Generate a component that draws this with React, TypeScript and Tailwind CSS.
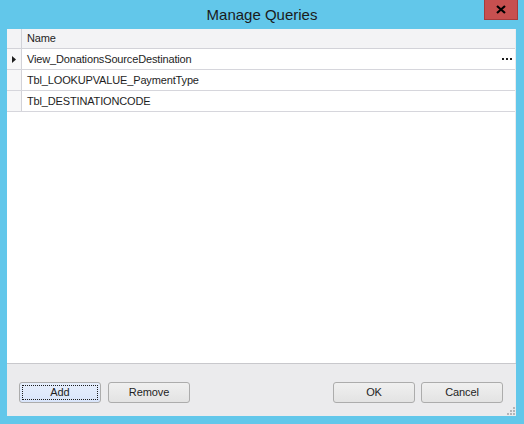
import React from 'react';

const rows = ['View_DonationsSourceDestination', 'Tbl_LOOKUPVALUE_PaymentType', 'Tbl_DESTINATIONCODE'];

const Btn: React.FC<{ label: string; focused?: boolean }> = ({ label, focused }) => (
  <button
    type="button"
    className={`w-[82px] h-[21px] rounded-[3px] border border-[#acacac] p-[2px] text-[11px] tracking-[-0.1px] text-[#1e1e1e] ${
      focused ? 'bg-gradient-to-b from-[#e6eefc] to-[#d9e5fa]' : 'bg-gradient-to-b from-[#f0f0f0] to-[#e3e3e3]'
    }`}
  >
    <span
      className={`flex h-full w-full items-center justify-center ${
        focused ? 'border border-dotted border-[#1e1e1e]' : ''
      }`}
    >
      {label}
    </span>
  </button>
);

export default function App() {
  return (
    <div
      className="w-[524px] h-[424px] bg-[#62c7ea] flex flex-col"
      style={{ fontFamily: '"Liberation Sans", Arial, sans-serif' }}
    >
      {/* Title bar */}
      <div className="relative h-[29px] flex items-center justify-center">
        <span className="text-[15px] text-[#1b1b1b] pt-[1px]">Manage Queries</span>
        <div className="absolute right-[6px] top-0 w-[34px] h-[20px] bg-[#c75050] border border-t-0 border-[#a63c3c] flex items-center justify-center">
          <svg width="10" height="9" viewBox="0 0 10 9">
            <path d="M1 1 L9 8 M9 1 L1 8" stroke="#000" strokeWidth="2.2" />
          </svg>
        </div>
      </div>

      {/* Client area */}
      <div className="flex-1 ml-[7px] mr-[8px] mb-[8px] flex flex-col bg-[#ebebed]">
        {/* Grid */}
        <div className="flex-1 bg-white flex flex-col text-[11px] tracking-[-0.15px] text-[#1e1e1e] mr-[1px]">
          <div className="flex h-[20px] bg-[#f3f3f5] border-b border-[#d2d2d8]">
            <div className="w-[15px] border-r border-[#d2d2d8]" />
            <div className="flex items-center pl-[5px]">Name</div>
          </div>
          {rows.map((r, i) => (
            <div key={r} className="flex h-[21px] border-b border-[#d6d6dc]">
              <div className="w-[15px] bg-[#f7f7f8] border-r border-[#d2d2d8] flex items-center justify-center">
                {i === 0 && (
                  <svg width="4" height="7" viewBox="0 0 4 7">
                    <path d="M0 0 L4 3.5 L0 7 Z" fill="#1e1e1e" />
                  </svg>
                )}
              </div>
              <div className="flex-1 flex items-center pl-[5px]">{r}</div>
              {i === 0 && (
                <div className="flex items-center gap-[2px] pr-[3px]">
                  <span className="w-[2px] h-[2px] bg-[#1e1e1e]" />
                  <span className="w-[2px] h-[2px] bg-[#1e1e1e]" />
                  <span className="w-[2px] h-[2px] bg-[#1e1e1e]" />
                </div>
              )}
            </div>
          ))}
        </div>

        {/* Buttons */}
        <div className="relative h-[53px] border-t border-[#c8c8cc] flex items-start pt-[18px] pl-[12px] pr-[13px]">
          <div className="flex gap-[7px]">
            <Btn label="Add" focused />
            <Btn label="Remove" />
          </div>
          <div className="ml-auto flex gap-[6px]">
            <Btn label="OK" />
            <Btn label="Cancel" />
          </div>
          <svg className="absolute right-[1px] bottom-[1px]" width="8" height="8" viewBox="0 0 8 8">
            <g fill="#b4b4b8">
              <rect x="6" y="0" width="2" height="2" />
              <rect x="3" y="3" width="2" height="2" />
              <rect x="6" y="3" width="2" height="2" />
              <rect x="0" y="6" width="2" height="2" />
              <rect x="3" y="6" width="2" height="2" />
              <rect x="6" y="6" width="2" height="2" />
            </g>
          </svg>
        </div>
      </div>
    </div>
  );
}
